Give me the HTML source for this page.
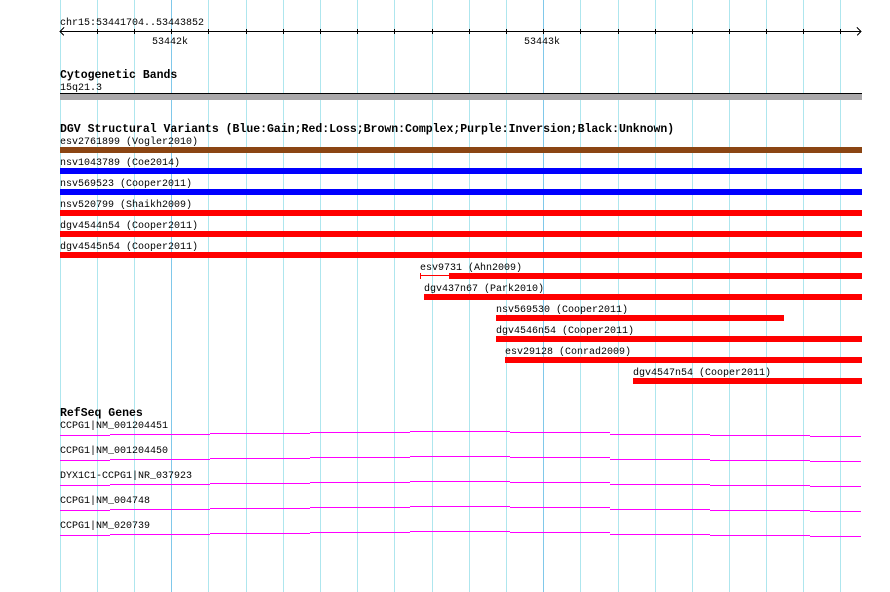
<!DOCTYPE html>
<html><head><meta charset="utf-8"><style>
html,body{margin:0;padding:0;background:#fff;width:890px;height:592px;overflow:hidden}
svg text{font-family:"Liberation Mono","DejaVu Sans Mono",monospace;font-size:10px;fill:#000}
svg text.h{font-weight:bold;font-size:11.5px}
</style></head><body>
<svg width="890" height="592" xmlns="http://www.w3.org/2000/svg" shape-rendering="crispEdges">
<g stroke-width="1">
<line x1="60.5" y1="0" x2="60.5" y2="592" stroke="#aee6ee"/>
<line x1="97.5" y1="0" x2="97.5" y2="592" stroke="#aee6ee"/>
<line x1="134.5" y1="0" x2="134.5" y2="592" stroke="#aee6ee"/>
<line x1="171.5" y1="0" x2="171.5" y2="592" stroke="#80c8ea"/>
<line x1="208.5" y1="0" x2="208.5" y2="592" stroke="#aee6ee"/>
<line x1="246.5" y1="0" x2="246.5" y2="592" stroke="#aee6ee"/>
<line x1="283.5" y1="0" x2="283.5" y2="592" stroke="#aee6ee"/>
<line x1="320.5" y1="0" x2="320.5" y2="592" stroke="#aee6ee"/>
<line x1="357.5" y1="0" x2="357.5" y2="592" stroke="#aee6ee"/>
<line x1="394.5" y1="0" x2="394.5" y2="592" stroke="#aee6ee"/>
<line x1="432.5" y1="0" x2="432.5" y2="592" stroke="#aee6ee"/>
<line x1="469.5" y1="0" x2="469.5" y2="592" stroke="#aee6ee"/>
<line x1="506.5" y1="0" x2="506.5" y2="592" stroke="#aee6ee"/>
<line x1="543.5" y1="0" x2="543.5" y2="592" stroke="#80c8ea"/>
<line x1="580.5" y1="0" x2="580.5" y2="592" stroke="#aee6ee"/>
<line x1="618.5" y1="0" x2="618.5" y2="592" stroke="#aee6ee"/>
<line x1="655.5" y1="0" x2="655.5" y2="592" stroke="#aee6ee"/>
<line x1="692.5" y1="0" x2="692.5" y2="592" stroke="#aee6ee"/>
<line x1="729.5" y1="0" x2="729.5" y2="592" stroke="#aee6ee"/>
<line x1="766.5" y1="0" x2="766.5" y2="592" stroke="#aee6ee"/>
<line x1="803.5" y1="0" x2="803.5" y2="592" stroke="#aee6ee"/>
<line x1="840.5" y1="0" x2="840.5" y2="592" stroke="#aee6ee"/>
</g>
<text x="60" y="25">chr15:53441704..53443852</text>
<line x1="60" y1="31.5" x2="861" y2="31.5" stroke="#000"/>
<path d="M64 27.5 L60 31.5 L64 35.5 M857 27.5 L861 31.5 L857 35.5" stroke="#000" fill="none"/>
<g stroke="#000">
<line x1="97.5" y1="29" x2="97.5" y2="34"/><line x1="134.5" y1="29" x2="134.5" y2="34"/><line x1="171.5" y1="29" x2="171.5" y2="34"/><line x1="208.5" y1="29" x2="208.5" y2="34"/><line x1="246.5" y1="29" x2="246.5" y2="34"/><line x1="283.5" y1="29" x2="283.5" y2="34"/><line x1="320.5" y1="29" x2="320.5" y2="34"/><line x1="357.5" y1="29" x2="357.5" y2="34"/><line x1="394.5" y1="29" x2="394.5" y2="34"/><line x1="432.5" y1="29" x2="432.5" y2="34"/><line x1="469.5" y1="29" x2="469.5" y2="34"/><line x1="506.5" y1="29" x2="506.5" y2="34"/><line x1="543.5" y1="29" x2="543.5" y2="34"/><line x1="580.5" y1="29" x2="580.5" y2="34"/><line x1="618.5" y1="29" x2="618.5" y2="34"/><line x1="655.5" y1="29" x2="655.5" y2="34"/><line x1="692.5" y1="29" x2="692.5" y2="34"/><line x1="729.5" y1="29" x2="729.5" y2="34"/><line x1="766.5" y1="29" x2="766.5" y2="34"/><line x1="803.5" y1="29" x2="803.5" y2="34"/><line x1="840.5" y1="29" x2="840.5" y2="34"/>
</g>
<text x="152" y="44">53442k</text>
<text x="524" y="44">53443k</text>
<text class="h" x="60" y="78">Cytogenetic Bands</text>
<text x="60" y="90">15q21.3</text>
<rect x="60" y="93" width="802" height="1" fill="#000"/>
<rect x="60" y="94" width="802" height="6" fill="#aaa8aa"/>
<text class="h" x="60" y="132">DGV Structural Variants (Blue:Gain;Red:Loss;Brown:Complex;Purple:Inversion;Black:Unknown)</text>
<text x="60" y="144">esv2761899 (Vogler2010)</text>
<rect x="60" y="147" width="802" height="6" fill="#8b4513"/>
<text x="60" y="165">nsv1043789 (Coe2014)</text>
<rect x="60" y="168" width="802" height="6" fill="#0000ff"/>
<text x="60" y="186">nsv569523 (Cooper2011)</text>
<rect x="60" y="189" width="802" height="6" fill="#0000ff"/>
<text x="60" y="207">nsv520799 (Shaikh2009)</text>
<rect x="60" y="210" width="802" height="6" fill="#ff0000"/>
<text x="60" y="228">dgv4544n54 (Cooper2011)</text>
<rect x="60" y="231" width="802" height="6" fill="#ff0000"/>
<text x="60" y="249">dgv4545n54 (Cooper2011)</text>
<rect x="60" y="252" width="802" height="6" fill="#ff0000"/>
<text x="420" y="270">esv9731 (Ahn2009)</text>
<rect x="420" y="273" width="1" height="6" fill="#ff0000"/>
<rect x="420" y="275" width="29" height="1" fill="#ff0000"/>
<rect x="449" y="273" width="413" height="6" fill="#ff0000"/>
<text x="424" y="291">dgv437n67 (Park2010)</text>
<rect x="424" y="294" width="438" height="6" fill="#ff0000"/>
<text x="496" y="312">nsv569530 (Cooper2011)</text>
<rect x="496" y="315" width="288" height="6" fill="#ff0000"/>
<text x="496" y="333">dgv4546n54 (Cooper2011)</text>
<rect x="496" y="336" width="366" height="6" fill="#ff0000"/>
<text x="505" y="354">esv29128 (Conrad2009)</text>
<rect x="505" y="357" width="357" height="6" fill="#ff0000"/>
<text x="633" y="375">dgv4547n54 (Cooper2011)</text>
<rect x="633" y="378" width="229" height="6" fill="#ff0000"/>
<text class="h" x="60" y="416">RefSeq Genes</text>
<g fill="none" stroke="#ff00ff">
<path id="g" d="M60 435.5H110M110 434.5H210M210 433.5H310M310 432.5H410M410 431.5H510M510 432.5H610M610 434.5H710M710 435.5H810M810 436.5H861"/>
<path transform="translate(0,25)" d="M60 435.5H110M110 434.5H210M210 433.5H310M310 432.5H410M410 431.5H510M510 432.5H610M610 434.5H710M710 435.5H810M810 436.5H861"/>
<path transform="translate(0,50)" d="M60 435.5H110M110 434.5H210M210 433.5H310M310 432.5H410M410 431.5H510M510 432.5H610M610 434.5H710M710 435.5H810M810 436.5H861"/>
<path transform="translate(0,75)" d="M60 435.5H110M110 434.5H210M210 433.5H310M310 432.5H410M410 431.5H510M510 432.5H610M610 434.5H710M710 435.5H810M810 436.5H861"/>
<path transform="translate(0,100)" d="M60 435.5H110M110 434.5H210M210 433.5H310M310 432.5H410M410 431.5H510M510 432.5H610M610 434.5H710M710 435.5H810M810 436.5H861"/>
</g>
<text x="60" y="428">CCPG1|NM_001204451</text>
<text x="60" y="453">CCPG1|NM_001204450</text>
<text x="60" y="478">DYX1C1-CCPG1|NR_037923</text>
<text x="60" y="503">CCPG1|NM_004748</text>
<text x="60" y="528">CCPG1|NM_020739</text>
</svg>
</body></html>
